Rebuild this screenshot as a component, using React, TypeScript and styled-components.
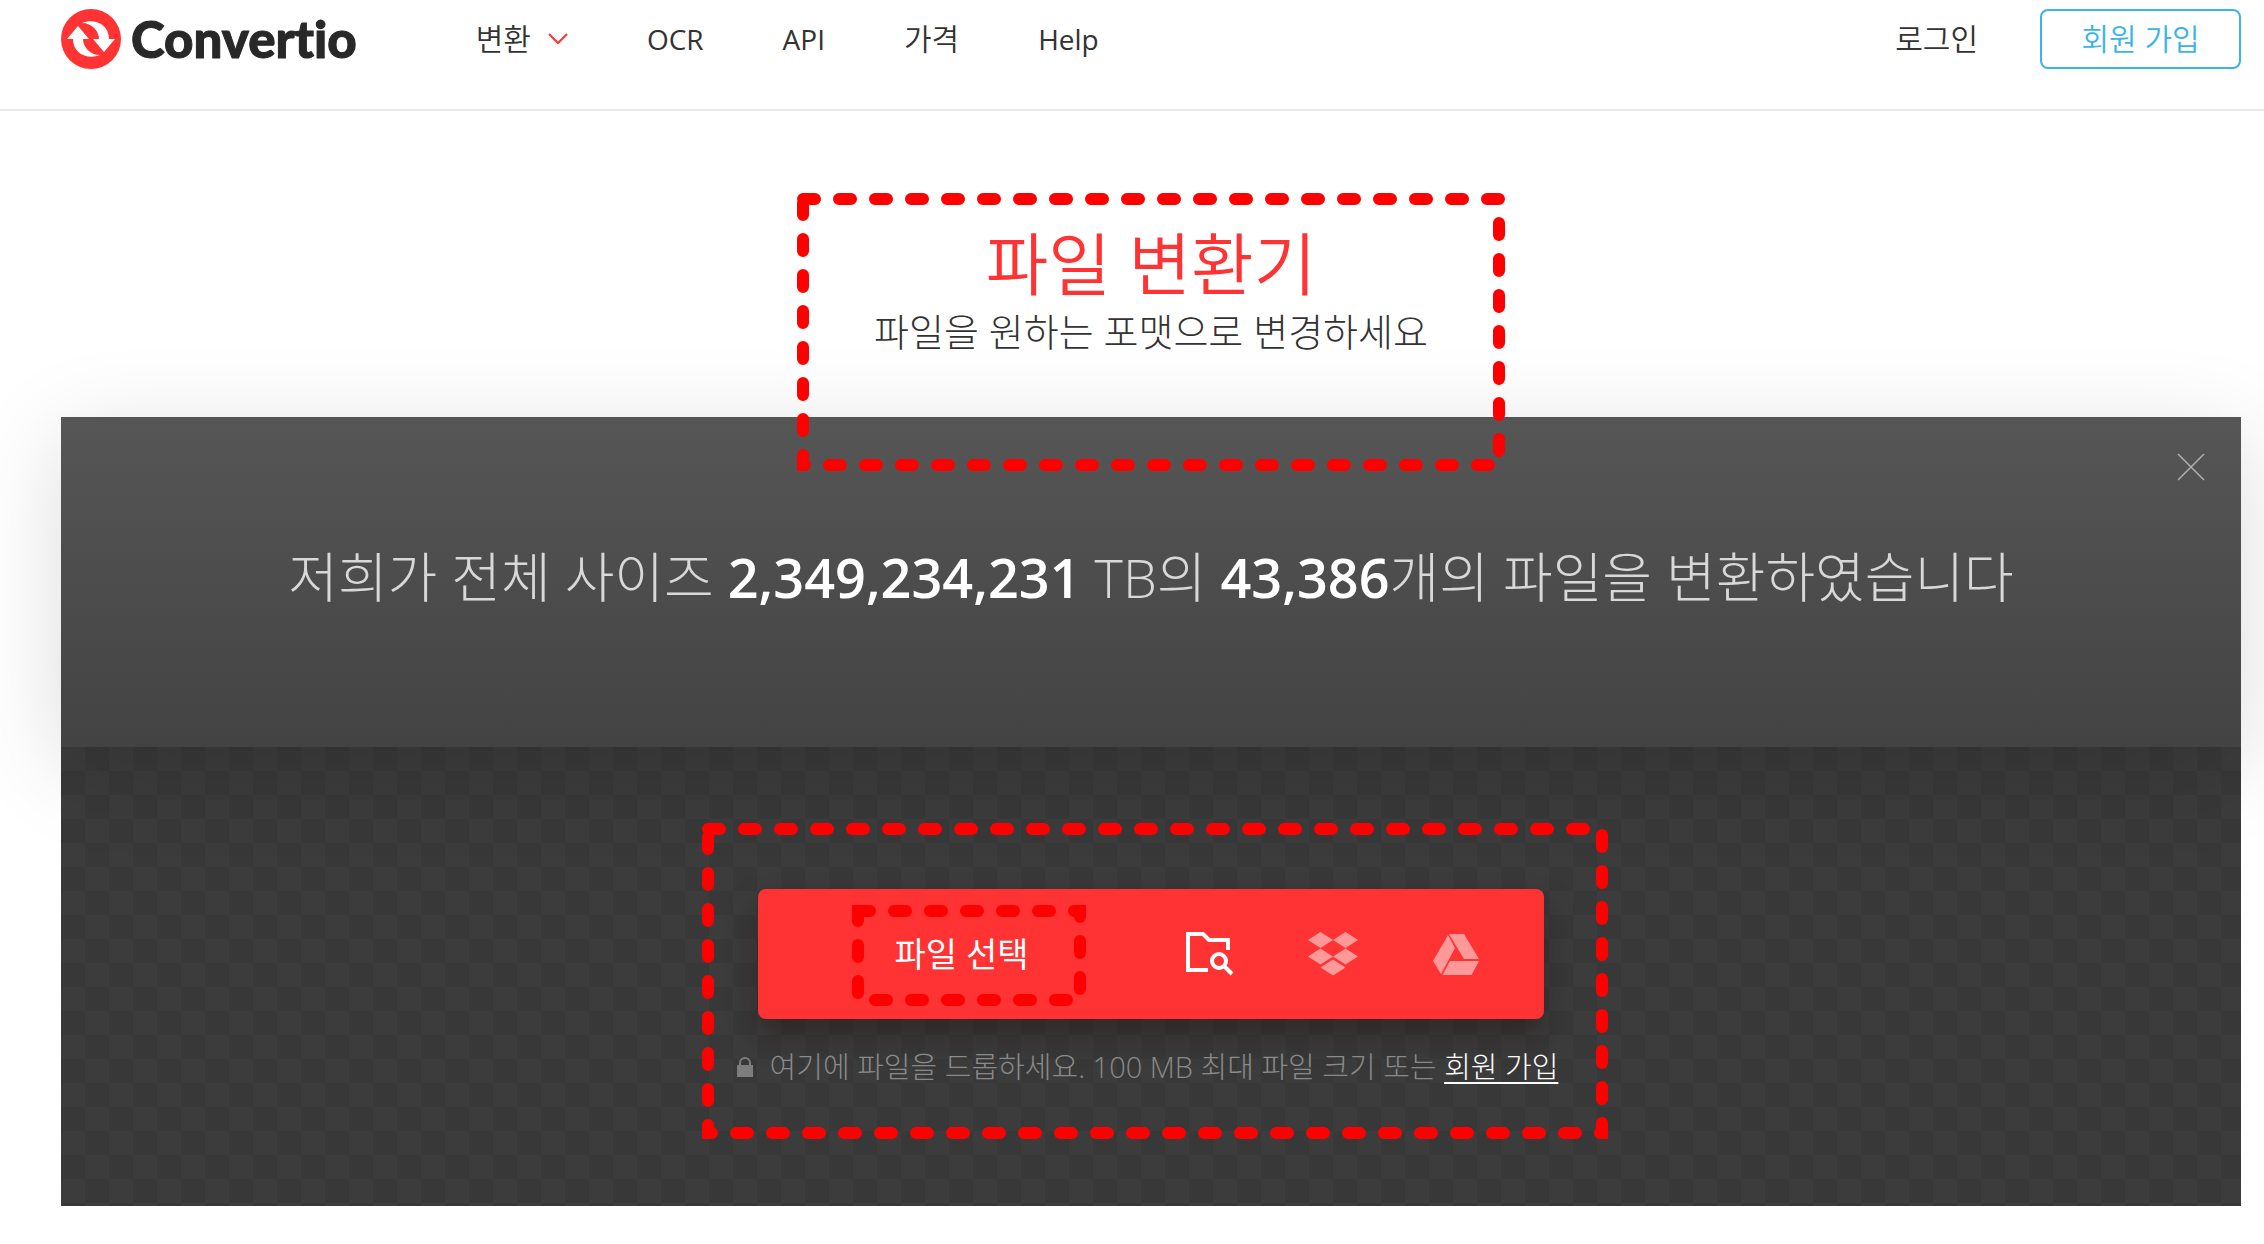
import React from "react";
import styled, { createGlobalStyle } from "styled-components";

const GlobalStyle = createGlobalStyle`
  * { box-sizing: border-box; }
  body {
    margin: 0;
    background: #fff;
    color: #333;
    font-family: "Open Sans", "Noto Sans CJK KR", sans-serif;
    overflow-x: hidden;
  }
  button { font: inherit; border: 0; background: none; padding: 0; cursor: pointer; }
  h1, p { margin: 0; font-weight: 300; }
  svg { display: block; }
`;

const Header = styled.header`
  display: flex;
  align-items: center;
  padding: 9px 23px 40px 61px;
  border-bottom: 2px solid #e8e8e8;
`;

const Logo = styled.a`
  display: flex;
  align-items: center;
  gap: 10px;
  height: 60px;
  color: #282828;
  font: 900 51px/58px Lato, sans-serif;
  font-variant-ligatures: none;
  -webkit-text-stroke: 1px #282828;
  text-decoration: none;
`;

const Nav = styled.nav`
  display: flex;
  align-items: center;
  gap: 79px;
  flex: 1;
  margin-left: 119px;
`;

const NavLink = styled.a<{ $korean?: boolean }>`
  color: #333;
  font-size: ${(p) => (p.$korean ? 30 : 28)}px;
  font-weight: ${(p) => (p.$korean ? 350 : 400)};
  line-height: 40px;
  text-decoration: none;
`;

const MenuButton = styled.button`
  display: flex;
  align-items: center;
  gap: 17px;
  color: #333;
  font-size: 30px;
  font-weight: 350;
  line-height: 40px;
`;

const Account = styled.div`
  display: flex;
  align-items: center;
  gap: 62px;
`;

const SignUp = styled.a`
  display: flex;
  align-items: center;
  justify-content: center;
  width: 201px;
  height: 60px;
  border: 2px solid #3cb4e7;
  border-radius: 8px;
  color: #3cb4e7;
  font-size: 30px;
  font-weight: 350;
  line-height: 40px;
  text-decoration: none;
`;

const Main = styled.main`
  padding: 0 23px 38px 61px;
`;

const Hero = styled.section`
  position: relative;
  display: flex;
  flex-direction: column;
  align-items: center;
  padding: 111px 0 61px;
  text-align: center;
`;

const Title = styled.h1`
  color: #ff3333;
  font-size: 68px;
  font-weight: 350;
  line-height: 84px;
`;

const Subtitle = styled.p`
  font-size: 38px;
  line-height: 50px;
`;

const Marker = styled.svg<{ $top: number; $shift: number }>`
  position: absolute;
  top: ${(p) => p.$top}px;
  left: 50%;
  transform: translateX(calc(-50% + ${(p) => p.$shift}px));
  z-index: 3;
  pointer-events: none;
`;

const Banner = styled.section`
  position: relative;
  z-index: 1;
  display: flex;
  align-items: center;
  justify-content: center;
  height: 330px;
  padding-bottom: 10px;
  background: linear-gradient(#565656, #434343);
  box-shadow: 0 20px 90px rgba(0, 0, 0, 0.14);
`;

const Stats = styled.p`
  color: #d8d8d8;
  font-size: 54px;
  line-height: 74px;
  white-space: nowrap;

  strong { color: #fff; font-weight: 600; }
`;

const CloseButton = styled.button`
  position: absolute;
  top: 36px;
  right: 36px;
`;

const DropArea = styled.section`
  position: relative;
  display: flex;
  flex-direction: column;
  align-items: center;
  height: 459px;
  padding-top: 142px;
  background: repeating-conic-gradient(#383838 0 25%, #3c3c3c 0 50%) 0 0 / 48px 48px;
`;

const Picker = styled.div`
  display: flex;
  width: 786px;
  height: 130px;
  padding: 0 27px 0 17px;
  border-radius: 8px;
  background: #ff3333;
  box-shadow: 0 16px 30px rgba(30, 10, 10, 0.35);
`;

const ChooseButton = styled.button`
  position: relative;
  flex: 1;
  color: #fff;
  font-size: 34px;
  line-height: 48px;
`;

const SourceButton = styled.button<{ $dim?: boolean }>`
  display: flex;
  align-items: center;
  justify-content: center;
  width: 123px;
  color: #fff;
  opacity: ${(p) => (p.$dim ? 0.5 : 1)};
`;

const Hint = styled.p`
  display: flex;
  align-items: center;
  gap: 16px;
  margin-top: 28px;
  padding-right: 8px;
  color: #8a8a8a;
  font-size: 29px;
  line-height: 40px;
  white-space: nowrap;

  a { color: #fff; text-decoration-thickness: 2px; text-underline-offset: 4px; }
`;

type DashedBoxProps = { width: number; height: number; top: number; shift?: number };

function DashedBox({ width, height, top, shift = 0 }: DashedBoxProps) {
  return (
    <Marker width={width} height={height} $top={top} $shift={shift} aria-hidden="true">
      <rect x="6" y="6" width={width - 12} height={height - 12} fill="none" stroke="#f00"
        strokeWidth="12" strokeLinecap="round" strokeDasharray="12 24" />
    </Marker>
  );
}

const LogoMark = () => (
  <svg width="60" height="60" viewBox="0 0 60 60" aria-hidden="true">
    <circle cx="30" cy="30" r="30" fill="#ff3333" />
    <g fill="#fff">
      <path d="M21 14C33 9 48 15 48 30H54L43 43L32 30H38C38 22 31 14 21 14Z" />
      <path d="M39 46C27 51 12 45 12 30H6L17 17L28 30H22C22 38 29 46 39 46Z" />
    </g>
  </svg>
);

export default function App() {
  return (
    <>
      <GlobalStyle />
      <Header>
        <Logo href="#"><LogoMark />Convertio</Logo>
        <Nav>
          <MenuButton>
            변환
            <svg width="20" height="12" viewBox="0 0 20 12" fill="none" stroke="#ff3333" strokeWidth="2" aria-hidden="true">
              <path d="M1 1L10 10L19 1" />
            </svg>
          </MenuButton>
          <NavLink href="#">OCR</NavLink>
          <NavLink href="#">API</NavLink>
          <NavLink href="#" $korean>가격</NavLink>
          <NavLink href="#">Help</NavLink>
        </Nav>
        <Account>
          <NavLink href="#" $korean>로그인</NavLink>
          <SignUp href="#">회원 가입</SignUp>
        </Account>
      </Header>
      <Main>
        <Hero>
          <Title>파일 변환기</Title>
          <Subtitle>파일을 원하는 포맷으로 변경하세요</Subtitle>
          <DashedBox width={708} height={278} top={82} />
        </Hero>
        <Banner>
          <Stats>
            저희가 전체 사이즈 <strong>2,349,234,231</strong> TB의 <strong>43,386</strong>개의 파일을 변환하였습니다
          </Stats>
          <CloseButton aria-label="닫기">
            <svg width="28" height="28" viewBox="0 0 28 28" stroke="#b0b0b0" strokeWidth="1.5" aria-hidden="true">
              <path d="M1 1L27 27M27 1L1 27" />
            </svg>
          </CloseButton>
        </Banner>
        <DropArea>
          <Picker>
            <ChooseButton>
              파일 선택
              <DashedBox width={234} height={101} top={16} shift={7} />
            </ChooseButton>
            <SourceButton aria-label="내 컴퓨터">
              <svg width="48" height="44" viewBox="0 0 48 44" fill="none" stroke="#fff" strokeWidth="4" aria-hidden="true">
                <path d="M22 38H2V2H17L23 8H42V18" />
                <circle cx="33" cy="29" r="7" />
                <path d="M38 34L46 42" />
              </svg>
            </SourceButton>
            <SourceButton $dim aria-label="Dropbox">
              <svg width="50" height="44" viewBox="0 0 50 44" fill="#fff" aria-hidden="true">
                <path d="M12.5 0L25 8L12.5 16L0 8ZM37.5 0L50 8L37.5 16L25 8ZM12.5 16.5L25 24.5L12.5 32.5L0 24.5ZM37.5 16.5L50 24.5L37.5 32.5L25 24.5ZM25 27.5L37.5 35.5L25 43.5L12.5 35.5Z" />
              </svg>
            </SourceButton>
            <SourceButton $dim aria-label="Google Drive">
              <svg width="46" height="41" viewBox="0 0 46 41" fill="#fff" aria-hidden="true">
                <path d="M15 1L22 14L8 40L0 27ZM16 0H31L46 25H31ZM17 27H46L38.5 41H9.5Z" />
              </svg>
            </SourceButton>
          </Picker>
          <Hint>
            <svg width="18" height="20" viewBox="0 0 18 20" aria-hidden="true">
              <rect x="1" y="8" width="16" height="12" fill="#7d7d7d" />
              <path d="M4 9V6A5 5 0 0 1 14 6V9" fill="none" stroke="#7d7d7d" strokeWidth="2" />
            </svg>
            <span>여기에 파일을 드롭하세요. 100 MB 최대 파일 크기 또는 <a href="#">회원 가입</a></span>
          </Hint>
          <DashedBox width={906} height={316} top={76} shift={4} />
        </DropArea>
      </Main>
    </>
  );
}
